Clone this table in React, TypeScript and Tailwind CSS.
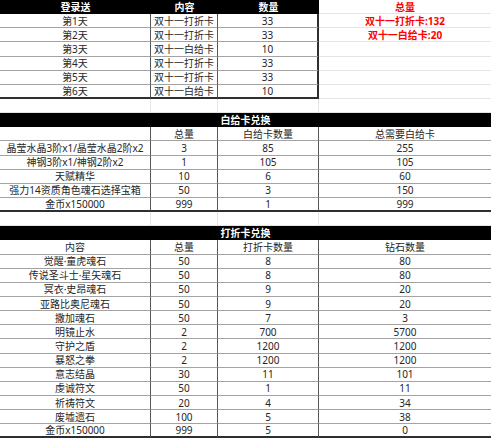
import React from 'react';

const ROW = 'grid grid-cols-[151px_67px_101px_172px] h-[14.15px]';
const CELL =
  'flex items-center justify-center whitespace-nowrap text-[10px] leading-[12px]';
const LINE = 'border-b border-b-[#a3a3a3]';
const VLINE = 'border-r border-r-[#555]';
const FAINT_B = 'border-b border-b-[#e4e4e4]';
const FAINT_R = 'border-r border-r-[#e4e4e4]';
const THICK_B = 'border-b-2 border-b-[#2e2e2e]';

const loginRows = [
  ['第1天', '双十一打折卡', '33', '双十一打折卡:132'],
  ['第2天', '双十一打折卡', '33', '双十一白给卡:20'],
  ['第3天', '双十一白给卡', '10', ''],
  ['第4天', '双十一打折卡', '33', ''],
  ['第5天', '双十一打折卡', '33', ''],
  ['第6天', '双十一白给卡', '10', ''],
];

const whiteRows = [
  ['晶莹水晶3阶x1/晶莹水晶2阶x2', '3', '85', '255'],
  ['神钢3阶x1/神钢2阶x2', '1', '105', '105'],
  ['天赋精华', '10', '6', '60'],
  ['强力14资质角色魂石选择宝箱', '50', '3', '150'],
  ['金币x150000', '999', '1', '999'],
];

const discountRows = [
  ['觉醒·童虎魂石', '50', '8', '80'],
  ['传说圣斗士·星矢魂石', '50', '8', '80'],
  ['冥衣·史昂魂石', '50', '9', '20'],
  ['亚路比奥尼魂石', '50', '9', '20'],
  ['撒加魂石', '50', '7', '3'],
  ['明镜止水', '2', '700', '5700'],
  ['守护之盾', '2', '1200', '1200'],
  ['暴怒之拳', '2', '1200', '1200'],
  ['意志结晶', '30', '11', '101'],
  ['虔诚符文', '50', '1', '11'],
  ['祈祷符文', '20', '4', '34'],
  ['废墟遗石', '100', '5', '38'],
  ['金币x150000', '999', '5', '0'],
];

function EmptyRow() {
  return (
    <div className={ROW}>
      <div className={`${FAINT_B} ${FAINT_R}`} />
      <div className={`${FAINT_B} ${FAINT_R}`} />
      <div className={`${FAINT_B} ${FAINT_R}`} />
      <div className={FAINT_B} />
    </div>
  );
}

function TitleBar({ title }: { title: string }) {
  return (
    <div className={ROW}>
      <div className={`${CELL} col-span-4 bg-black text-white font-bold`}>{title}</div>
    </div>
  );
}

function TableRow({ cells, last }: { cells: string[]; last?: boolean }) {
  const b = last ? THICK_B : LINE;
  return (
    <div className={ROW}>
      <div className={`${CELL} ${b} ${VLINE}`}>{cells[0]}</div>
      <div className={`${CELL} ${b} ${VLINE}`}>{cells[1]}</div>
      <div className={`${CELL} ${b} ${VLINE}`}>{cells[2]}</div>
      <div className={`${CELL} ${b}`}>{cells[3]}</div>
    </div>
  );
}

export default function App() {
  return (
    <div className="w-[491px] h-[440px] bg-white text-[#262626] font-['Noto_Sans','Noto_Sans_CJK_SC',sans-serif] overflow-hidden">
      {/* 登录送 */}
      <div className={ROW}>
        <div className={`${CELL} bg-black text-white font-bold`}>登录送</div>
        <div className={`${CELL} bg-black text-white font-bold`}>内容</div>
        <div className={`${CELL} bg-black text-white font-bold`}>数量</div>
        <div className={`${CELL} ${FAINT_B} text-[#ff0000] font-bold`}>总量</div>
      </div>
      {loginRows.map((r, i) => {
        const b = i === loginRows.length - 1 ? THICK_B : LINE;
        return (
          <div key={i} className={ROW}>
            <div className={`${CELL} ${b} ${VLINE}`}>{r[0]}</div>
            <div className={`${CELL} ${b} ${VLINE}`}>{r[1]}</div>
            <div className={`${CELL} ${b} border-r-2 border-r-[#2e2e2e]`}>{r[2]}</div>
            <div className={`${CELL} ${FAINT_B} text-[#ff0000] font-bold`}>{r[3]}</div>
          </div>
        );
      })}
      <EmptyRow />

      {/* 白给卡兑换 */}
      <TitleBar title="白给卡兑换" />
      <TableRow cells={['', '总量', '白给卡数量', '总需要白给卡']} />
      {whiteRows.map((r, i) => (
        <TableRow key={i} cells={r} last={i === whiteRows.length - 1} />
      ))}
      <EmptyRow />

      {/* 打折卡兑换 */}
      <TitleBar title="打折卡兑换" />
      <TableRow cells={['内容', '总量', '打折卡数量', '钻石数量']} />
      {discountRows.map((r, i) => (
        <TableRow key={i} cells={r} last={i === discountRows.length - 1} />
      ))}
    </div>
  );
}
